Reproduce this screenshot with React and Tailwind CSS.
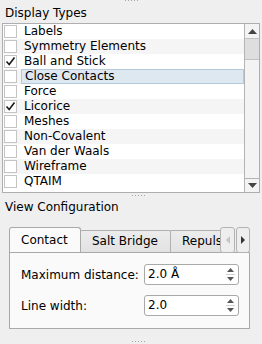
import React from "react";

const items = [
  { label: "Labels", checked: false },
  { label: "Symmetry Elements", checked: false },
  { label: "Ball and Stick", checked: true },
  { label: "Close Contacts", checked: false, selected: true },
  { label: "Force", checked: false },
  { label: "Licorice", checked: true },
  { label: "Meshes", checked: false },
  { label: "Non-Covalent", checked: false },
  { label: "Van der Waals", checked: false },
  { label: "Wireframe", checked: false },
  { label: "QTAIM", checked: false },
];

function Dots() {
  return (
    <div className="flex gap-[2px]">
      {[0, 1, 2, 3, 4].map((i) => (
        <div key={i} className="w-px h-px bg-[#a6a6a6]" />
      ))}
    </div>
  );
}

function Check() {
  return (
    <svg width="11" height="11" viewBox="0 0 11 11">
      <path d="M1.5 5.5 L4.2 8.5 L9.5 1.5" fill="none" stroke="#1a1a1a" strokeWidth="1.6" />
    </svg>
  );
}

function Row({ item, index }) {
  const alt = index % 2 === 1;
  return (
    <div className={`flex h-[15px] items-stretch ${alt ? "bg-[#f5f5f5]" : "bg-white"}`}>
      <div className="w-[18px] flex items-center pl-[1px]">
        <div className="w-[13px] h-[13px] border border-[#c4c4c4] bg-white flex items-center justify-center">
          {item.checked && <Check />}
        </div>
      </div>
      <div
        className={`flex-1 flex items-center pl-[3px] leading-[15px] ${
          item.selected ? "bg-[#dde8f1] border border-[#b7c9d8] pl-[2px]" : ""
        }`}
      >
        {item.label}
      </div>
    </div>
  );
}

function Spin({ value }) {
  return (
    <div className="w-[95px] h-[21px] border border-[#a9a9a9] rounded-[3px] bg-white flex items-center">
      <div className="flex-1 pl-[3px] leading-[19px]">{value}</div>
      <div className="w-[14px] h-full flex flex-col items-center justify-center gap-[2px] pr-[1px]">
        <svg width="7" height="4" viewBox="0 0 7 4"><path d="M0 4 L3.5 0 L7 4Z" fill="#555" /></svg>
        <div className="w-[9px] h-px bg-[#d0d0d0]" />
        <svg width="7" height="4" viewBox="0 0 7 4"><path d="M0 0 L3.5 4 L7 0Z" fill="#555" /></svg>
      </div>
    </div>
  );
}

export default function App() {
  return (
    <div
      className="w-[262px] h-[344px] bg-[#efefef] text-black overflow-hidden flex flex-col text-[12px]"
      style={{ fontFamily: '"DejaVu Sans", sans-serif' }}
    >
      <div className="h-[3px] flex justify-center pl-[1px]">
        <Dots />
      </div>
      <div className="h-[20px] pl-[5px] leading-[20px]">Display Types</div>
      <div className="ml-[2px] w-[258px] h-[170px] border border-[#aeaeae] bg-white flex">
        <div className="flex-1 flex flex-col">
          {items.map((it, i) => (
            <Row key={it.label} item={it} index={i} />
          ))}
        </div>
        <div className="w-[15px] border-l border-[#b4b4b4] bg-[#f3f3f3] flex flex-col">
          <div className="h-[14px] flex items-center justify-center">
            <svg width="9" height="5" viewBox="0 0 9 5"><path d="M0 5 L4.5 0 L9 5Z" fill="#444" /></svg>
          </div>
          <div className="h-[22px] bg-[#dedede] border-y border-[#c2c2c2]" />
          <div className="flex-1" />
          <div className="h-[14px] border-t border-[#b4b4b4] flex items-center justify-center">
            <svg width="9" height="5" viewBox="0 0 9 5"><path d="M0 0 L4.5 5 L9 0Z" fill="#444" /></svg>
          </div>
        </div>
      </div>
      <div className="h-[5px] flex items-center justify-center pl-[14px]">
        <Dots />
      </div>
      <div className="h-[18px] pl-[5px] leading-[18px]">View Configuration</div>
      <div className="h-[11px]" />
      <div className="ml-[9px] w-[241px] flex flex-col">
        <div className="h-[25px] flex items-end">
          <div className="w-[211px] h-[25px] overflow-hidden flex items-end">
            <div className="relative z-10 -mb-px h-[26px] w-[72px] shrink-0 border border-b-0 border-[#a9a9a9] rounded-t-[3px] bg-[#fafafa] pl-[11px] leading-[24px]">
              Contact
            </div>
            <div className="-ml-px h-[22px] w-[91px] shrink-0 border border-b-0 border-[#b0b0b0] rounded-t-[2px] bg-gradient-to-b from-[#ececec] to-[#e2e2e2] pl-[11px] leading-[21px]">
              Salt Bridge
            </div>
            <div className="-ml-px h-[22px] w-[80px] shrink-0 border border-b-0 border-[#b0b0b0] rounded-t-[2px] bg-gradient-to-b from-[#ececec] to-[#e2e2e2] pl-[11px] leading-[21px] whitespace-nowrap">
              Repulsion
            </div>
          </div>
          <div className="relative z-10 -mb-px h-[26px] w-[15px] border border-[#b3b3b3] rounded-[3px] bg-[#eeeeee] flex items-center justify-center">
            <svg width="4" height="8" viewBox="0 0 4 8"><path d="M4 0 L0 4 L4 8Z" fill="#c4c4c4" /></svg>
          </div>
          <div className="relative z-10 -mb-px ml-px h-[26px] w-[14px] border border-[#b3b3b3] rounded-[3px] bg-[#eeeeee] flex items-center justify-center">
            <svg width="4" height="8" viewBox="0 0 4 8"><path d="M0 0 L4 4 L0 8Z" fill="#333" /></svg>
          </div>
        </div>
        <div className="h-[77px] border border-[#a9a9a9] bg-[#fafafa] pt-[11px] px-[11px] flex flex-col gap-[10px]">
          <div className="grid grid-cols-[123px_95px] items-center">
            <div>Maximum distance:</div>
            <Spin value="2.0 Å" />
          </div>
          <div className="grid grid-cols-[123px_95px] items-center">
            <div>Line width:</div>
            <Spin value="2.0" />
          </div>
        </div>
      </div>
      <div className="flex-1 flex items-end justify-center pb-[2px] pl-[14px]">
        <Dots />
      </div>
    </div>
  );
}
